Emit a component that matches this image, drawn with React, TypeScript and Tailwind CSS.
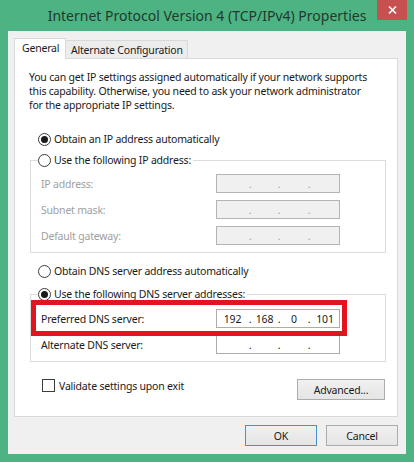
import { FC } from 'react'

const Radio: FC<{ checked?: boolean }> = ({ checked }) => (
  <span className="flex h-[13px] w-[13px] shrink-0 items-center justify-center rounded-full border border-[#3c3c3c] bg-white">
    {checked && <span className="h-[7px] w-[7px] rounded-full bg-[#1a1a1a]" />}
  </span>
)

interface IpBoxProps {
  parts?: string[]
  disabled?: boolean
}

const IpBox: FC<IpBoxProps> = ({ parts = ['', '', '', ''], disabled }) => {
  const tone = disabled ? 'text-[#a0a0a0]' : 'text-[#1a1a1a]'
  return (
    <div
      className={`flex h-[19px] w-[124px] items-center border ${
        disabled ? 'border-[#b4b4b4] bg-[#f0f0f0]' : 'border-[#acacac] bg-white'
      } ${tone}`}>
      <span className="w-[31px] text-center">{parts[0]}</span>
      <span className="w-[4px] text-center">.</span>
      <span className="w-[25px] text-center">{parts[1]}</span>
      <span className="w-[4px] text-center">.</span>
      <span className="w-[26px] text-center">{parts[2]}</span>
      <span className="w-[4px] text-center">.</span>
      <span className="flex-1 text-center">{parts[3]}</span>
    </div>
  )
}

const FieldRow: FC<{ label: string; disabled?: boolean; parts?: string[] }> = ({
  label,
  disabled,
  parts
}) => (
  <div className="flex h-[19px] items-center">
    <span className={`w-[175px] ${disabled ? 'text-[#a0a0a0]' : ''}`}>{label}</span>
    <IpBox parts={parts} disabled={disabled} />
  </div>
)

const App: FC = () => {
  return (
    <div className="flex h-[462px] w-[414px] flex-col whitespace-nowrap bg-[#4db382] font-['Noto_Sans',sans-serif] text-[10.5px] leading-[14px] tracking-[-0.2px] text-[#1a1a1a]">
      {/* title bar */}
      <div className="relative flex h-[31px] shrink-0 items-center justify-center">
        <span className="text-[14px] tracking-normal text-[#1f3a2e]">
          Internet Protocol Version 4 (TCP/IPv4) Properties
        </span>
        <div className="absolute right-[7px] top-0 flex h-[20px] w-[30px] items-center justify-center bg-[#c75050]">
          <svg width="9" height="8" viewBox="0 0 9 8">
            <path d="M1 0.5 L8 7.5 M8 0.5 L1 7.5" stroke="white" strokeWidth="1.6" />
          </svg>
        </div>
      </div>

      {/* client area */}
      <div className="mx-[8px] mb-[8px] flex flex-1 flex-col bg-[#f0f0f0] pl-[6px] pt-[7px]">
        <div className="flex h-[21px] items-end">
          <div className="relative z-10 flex h-[21px] w-[52px] items-center border border-b-0 border-[#d9d9d9] bg-white pb-[2px] pl-[7px]">
            General
          </div>
          <div className="mb-px flex h-[18px] w-[122px] items-center border border-b-0 border-l-0 border-[#d9d9d9] bg-[#ececec] pl-[5px]">
            Alternate Configuration
          </div>
        </div>

        <div className="relative -mt-px flex h-[359px] w-[384px] flex-col border border-[#d9d9d9] bg-white">
          <p className="pl-[14px] pt-[11px]">
            You can get IP settings assigned automatically if your network supports
            <br />
            this capability. Otherwise, you need to ask your network administrator
            <br />
            for the appropriate IP settings.
          </p>

          <div className="mt-[19px] flex h-[16px] items-center gap-[3px] pl-[23px]">
            <Radio checked />
            <span>Obtain an IP address automatically</span>
          </div>

          <fieldset className="ml-[15px] mt-[5px] w-[356px] border border-[#dcdcdc] pb-[7px] pl-[10px]">
            <legend className="-ml-[3px] flex h-[16px] items-center gap-[3px] bg-white pr-[2px]">
              <Radio />
              <span>Use the following IP address:</span>
            </legend>
            <div className="mt-[6px] flex flex-col gap-[7px]">
              <FieldRow label="IP address:" disabled />
              <FieldRow label="Subnet mask:" disabled />
              <FieldRow label="Default gateway:" disabled />
            </div>
          </fieldset>

          <div className="mt-[10px] flex h-[16px] items-center gap-[3px] pl-[23px]">
            <Radio />
            <span>Obtain DNS server address automatically</span>
          </div>

          <fieldset className="ml-[15px] mt-[7px] w-[356px] border border-[#dcdcdc] pb-[7px] pl-[10px]">
            <legend className="-ml-[3px] flex h-[16px] items-center gap-[3px] bg-white pr-[2px]">
              <Radio checked />
              <span>Use the following DNS server addresses:</span>
            </legend>
            <div className="mt-[7px] flex flex-col gap-[7px]">
              <FieldRow label="Preferred DNS server:" parts={['192', '168', '0', '101']} />
              <FieldRow label="Alternate DNS server:" />
            </div>
          </fieldset>

          <div className="mt-[17px] flex items-start justify-between pl-[27px] pr-[12px]">
            <div className="flex h-[13px] items-center gap-[4px]">
              <span className="h-[13px] w-[13px] border border-[#3c3c3c] bg-white" />
              <span>Validate settings upon exit</span>
            </div>
            <button className="flex h-[21px] w-[88px] items-center justify-center border border-[#acacac] bg-gradient-to-b from-[#f0f0f0] to-[#e5e5e5]">
              Advanced...
            </button>
          </div>

          {/* red highlight drawn over the preferred DNS row */}
          <div className="pointer-events-none absolute left-[16px] top-[241px] h-[36px] w-[316px] border-[5px] border-[#e3141f]" />
        </div>

        <div className="mt-[8px] flex justify-end gap-[9px] pr-[8px]">
          <button className="flex h-[21px] w-[72px] items-center justify-center border border-[#4a8fd0] bg-gradient-to-b from-[#f0f0f0] to-[#e5e5e5]">
            OK
          </button>
          <button className="flex h-[21px] w-[72px] items-center justify-center border border-[#acacac] bg-gradient-to-b from-[#f0f0f0] to-[#e5e5e5]">
            Cancel
          </button>
        </div>
      </div>
    </div>
  )
}

export default App
